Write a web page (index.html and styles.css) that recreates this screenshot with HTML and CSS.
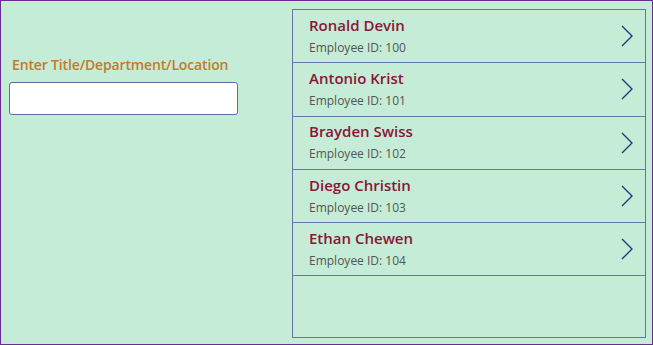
FILE: index.html
```html
<!DOCTYPE html>
<html lang="en">
<head>
  <meta charset="UTF-8" />
  <title>Employees</title>
  <link rel="stylesheet" href="styles.css">
</head>
<body>
  <div class="screen">
    <div class="search">
      <label for="filtro" class="search-label">Enter Title/Department/Location</label>
      <input type="text" id="filtro" class="search-input" />
    </div>

    <div class="gallery">
      <div class="row">
        <div class="info">
          <div class="name">Ronald Devin</div>
          <div class="emp-id">Employee ID: 100</div>
        </div>
        <svg class="chevron" width="14" height="22" viewBox="0 0 14 22"><path d="M2 1 L12 11 L2 21" fill="none" stroke="#1f3a7a" stroke-width="1.4"/></svg>
      </div>
      <div class="row">
        <div class="info">
          <div class="name">Antonio Krist</div>
          <div class="emp-id">Employee ID: 101</div>
        </div>
        <svg class="chevron" width="14" height="22" viewBox="0 0 14 22"><path d="M2 1 L12 11 L2 21" fill="none" stroke="#1f3a7a" stroke-width="1.4"/></svg>
      </div>
      <div class="row">
        <div class="info">
          <div class="name">Brayden Swiss</div>
          <div class="emp-id">Employee ID: 102</div>
        </div>
        <svg class="chevron" width="14" height="22" viewBox="0 0 14 22"><path d="M2 1 L12 11 L2 21" fill="none" stroke="#1f3a7a" stroke-width="1.4"/></svg>
      </div>
      <div class="row">
        <div class="info">
          <div class="name">Diego Christin</div>
          <div class="emp-id">Employee ID: 103</div>
        </div>
        <svg class="chevron" width="14" height="22" viewBox="0 0 14 22"><path d="M2 1 L12 11 L2 21" fill="none" stroke="#1f3a7a" stroke-width="1.4"/></svg>
      </div>
      <div class="row">
        <div class="info">
          <div class="name">Ethan Chewen</div>
          <div class="emp-id">Employee ID: 104</div>
        </div>
        <svg class="chevron" width="14" height="22" viewBox="0 0 14 22"><path d="M2 1 L12 11 L2 21" fill="none" stroke="#1f3a7a" stroke-width="1.4"/></svg>
      </div>
    </div>
  </div>
</body>
</html>
```

FILE: styles.css
```css
body {
  margin: 0;
  font-family: "Open Sans", Arial, sans-serif;
}
.screen {
  width: 653px;
  height: 345px;
  box-sizing: border-box;
  border: 1px solid #6b2c91;
  background-color: #c5ecd6;
  display: flex;
  align-items: flex-start;
  padding: 8px 6px 0 8px;
}
.search {
  width: 229px;
  display: flex;
  flex-direction: column;
  padding-top: 46px;
}
.search-label {
  color: #c27a2b;
  font-size: 14px;
  font-weight: 600;
  letter-spacing: -0.15px;
  padding-left: 3px;
  line-height: 20px;
  margin-bottom: 7px;
}
.search-input {
  height: 33px;
  box-sizing: border-box;
  border: 1px solid #5b6ea6;
  border-radius: 3px;
  background: #fff;
}
.gallery {
  margin-left: auto;
  width: 354px;
  height: 329px;
  box-sizing: border-box;
  border: 1px solid #6079a8;
}
.row {
  height: 53.3px;
  box-sizing: border-box;
  border-bottom: 1px solid #6079a8;
  display: flex;
  align-items: center;
  padding: 0 11px 0 16px;
}
.info {
  flex: 1;
}
.name {
  color: #8a1538;
  font-size: 15px;
  font-weight: 600;
  line-height: 20px;
}
.emp-id {
  color: #555;
  font-size: 12px;
  line-height: 20px;
  margin-top: 3px;
}
```
